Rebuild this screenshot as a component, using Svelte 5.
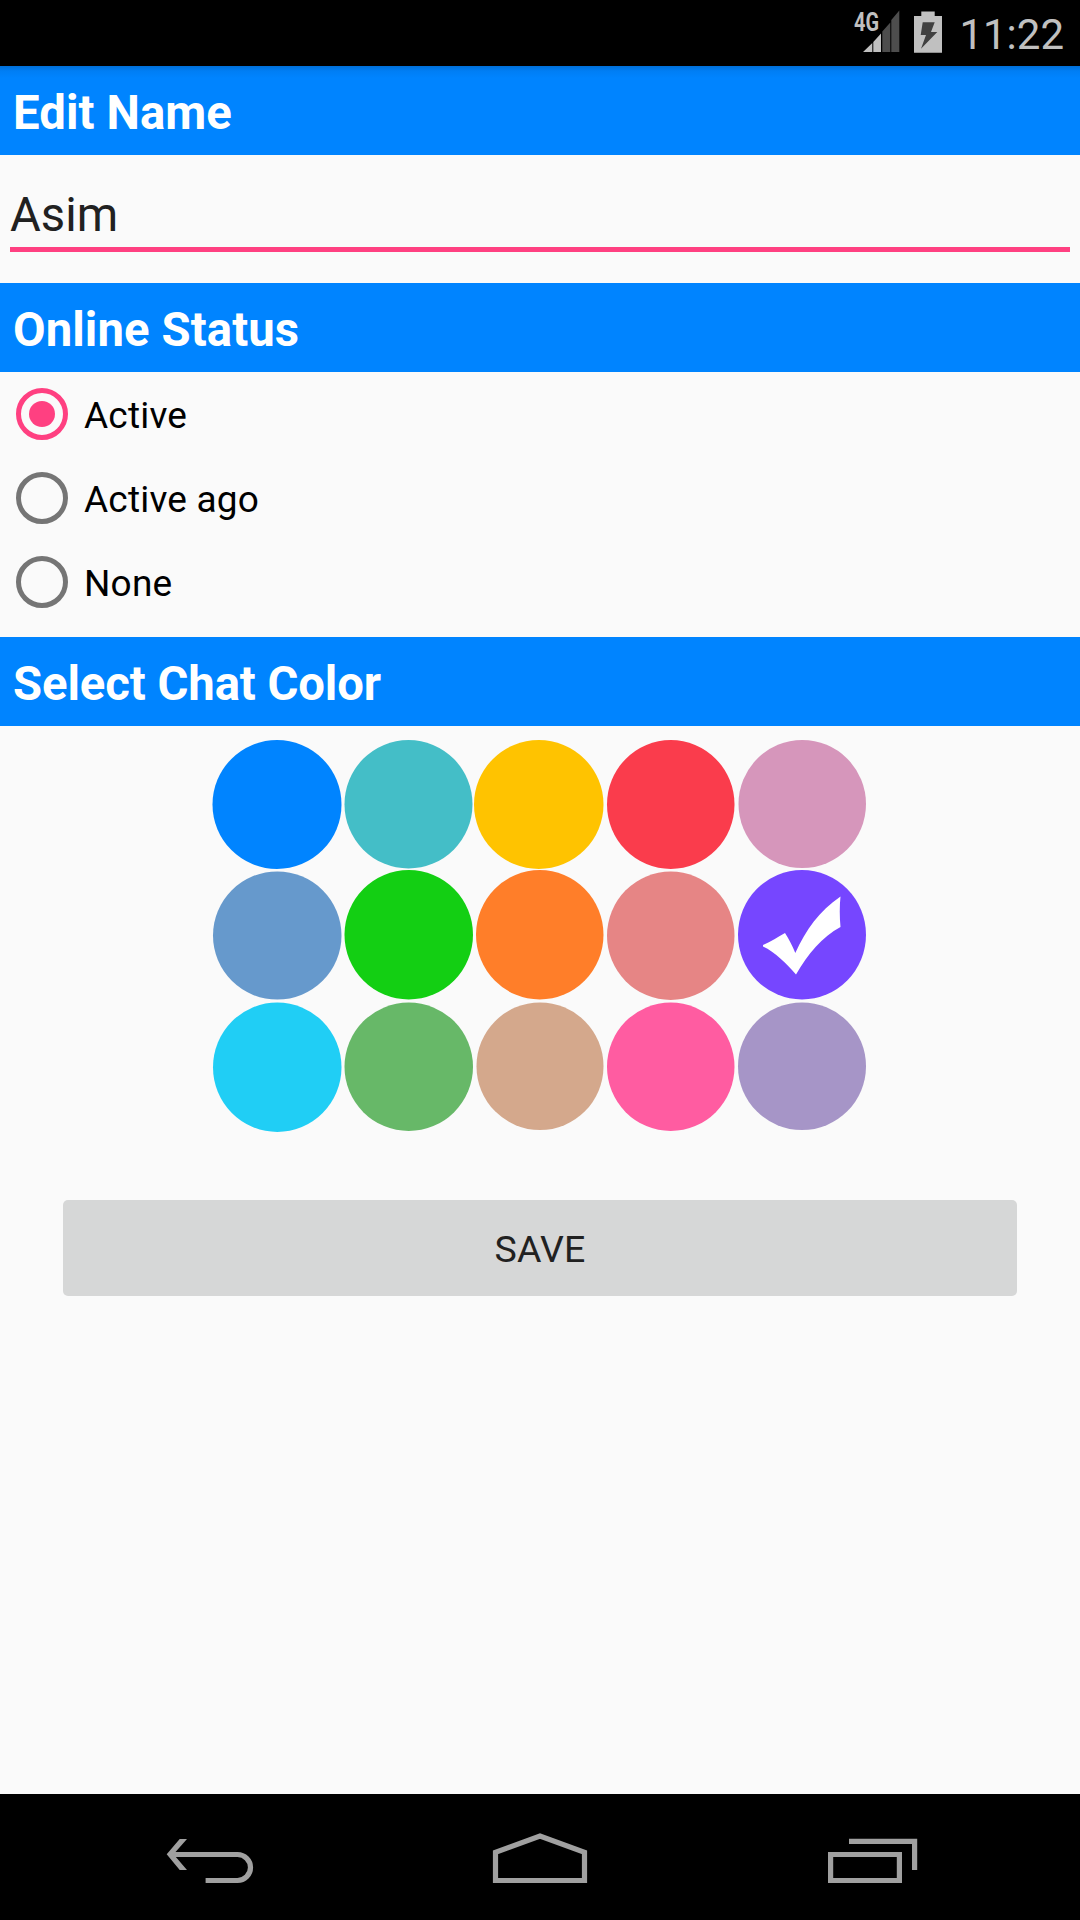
<script lang="ts">
  type Swatch = { color: string; x0: number; y0: number; x1: number; y1: number };

  // bounds of every disc inside its 131px cell
  const swatches: Swatch[] = [
    { color: '#0084ff', x0: 0.5, y0: 1, x1: 129.5, y1: 130 },
    { color: '#44bec7', x0: 1.5, y0: 1, x1: 129.5, y1: 129.5 },
    { color: '#ffc300', x0: 0, y0: 1, x1: 129.5, y1: 130 },
    { color: '#fa3c4c', x0: 2, y0: 1, x1: 129.5, y1: 130 },
    { color: '#d696bb', x0: 2.5, y0: 1, x1: 130, y1: 129 },
    { color: '#6699cc', x0: 1, y0: 1.5, x1: 129.5, y1: 129.5 },
    { color: '#13cf13', x0: 1.5, y0: 0, x1: 130, y1: 129.5 },
    { color: '#ff7e29', x0: 2, y0: 0, x1: 129.5, y1: 129.5 },
    { color: '#e68585', x0: 2, y0: 1.5, x1: 129.5, y1: 130 },
    { color: '#7646ff', x0: 2, y0: 0, x1: 130, y1: 129.5 },
    { color: '#20cef5', x0: 1, y0: 1.5, x1: 129.5, y1: 131 },
    { color: '#67b868', x0: 1.5, y0: 1.5, x1: 130, y1: 130 },
    { color: '#d4a88c', x0: 2.5, y0: 1.5, x1: 129.5, y1: 129 },
    { color: '#ff5ca1', x0: 2, y0: 1.5, x1: 129.5, y1: 130 },
    { color: '#a695c7', x0: 2, y0: 1.5, x1: 130, y1: 129 },
  ];

  const statuses = ['Active', 'Active ago', 'None'];

  let name = $state('Asim');
  let status = $state('Active');
  let selected = $state(9);
</script>

<div class="screen">
  <div class="statusbar">
    <svg class="signal" width="52" height="66" viewBox="0 0 52 66">
      <text x="1" y="31" textLength="25" lengthAdjust="spacingAndGlyphs">4G</text>
      <path class="on" d="M10 52L19.3 43V52ZM20.3 52V42L28 33.5V52Z" />
      <path class="off" d="M29.3 52V31.5L37.3 22.5V52ZM38.3 52V20L46.3 10.5V52Z" />
    </svg>
    <svg class="battery" width="28" height="66" viewBox="0 0 28 66">
      <path class="on" d="M7.3 11.5H20.7V16H28V52.7H0V16H7.3Z" />
      <path class="bolt" d="M8.7 22.3H20.7L17 32H23.3L7 48.7L12 35H6.7Z" />
    </svg>
    <span class="clock">11:22</span>
  </div>

  <main>
    <h2 class="first">Edit Name</h2>
    <div class="field">
      <input type="text" bind:value={name} aria-label="Name" />
    </div>

    <h2>Online Status</h2>
    <div class="radios">
      {#each statuses as s}
        <button class="radio" class:checked={status === s} onclick={() => (status = s)}>
          <span class="ring"></span>
          <span class="label">{s}</span>
        </button>
      {/each}
    </div>

    <h2 class="tight">Select Chat Color</h2>
    <div class="palette">
      {#each swatches as s, i}
        <button class="swatch" aria-label={s.color} onclick={() => (selected = i)}>
          <svg width="131" height="131" viewBox="0 0 131 131">
            <ellipse
              cx={(s.x0 + s.x1) / 2}
              cy={(s.y0 + s.y1) / 2}
              rx={(s.x1 - s.x0) / 2}
              ry={(s.y1 - s.y0) / 2}
              fill={s.color}
            />
            {#if selected === i}
              <path
                fill="#fff"
                d="M27 75C35 71.5 42 67 49 63C53 69 56.5 76 59.3 83C70 60 83 41 104.5 26.5C103.5 36 103.5 47 104.5 57C86 67 72 84 60 104.5C51 94 39 82 27 76.5Z"
              />
            {/if}
          </svg>
        </button>
      {/each}
    </div>

    <button class="save">SAVE</button>
  </main>

  <nav>
    <svg viewBox="0 0 330 126">
      <path d="M125 60.5H192.5A13 13 0 0 1 192.5 86.5H160.6" />
      <path class="solid" d="M121.7 60.3L134.7 45H142L128.5 60.3L142 76H134.7Z" />
    </svg>
    <svg viewBox="0 0 330 126">
      <path d="M120.5 86.5V58.3L165 42L209.5 58.3V86.5Z" />
    </svg>
    <svg viewBox="0 0 330 126">
      <path d="M125.6 60.5H194.4V86.5H125.6Z" />
      <path d="M144 47.3H209.6V76" />
    </svg>
  </nav>
</div>

<style>
  :global(body) {
    margin: 0;
    background: #fafafa;
  }
  .screen {
    display: flex;
    flex-direction: column;
    width: 1080px;
    height: 1920px;
    overflow: hidden;
    background: #fafafa;
    color: #000;
    font-family: Roboto, sans-serif;
  }
  button {
    margin: 0;
    padding: 0;
    border: 0;
    background: none;
    color: inherit;
    font: inherit;
  }

  .statusbar {
    display: flex;
    flex: none;
    justify-content: flex-end;
    height: 66px;
    padding-right: 16px;
    background: #000;
    color: #c0c0c0;
  }
  .signal {
    margin-right: 9px;
  }
  .signal text {
    font-size: 25px;
    font-weight: 700;
    fill: #c0c0c0;
  }
  .on { fill: #c0c0c0; }
  .off { fill: #4d4d4d; }
  .bolt { fill: #404040; }
  .battery {
    margin-right: 16px;
  }
  .clock {
    width: 106px;
    font-size: 42px;
    font-weight: 400;
    line-height: 69px;
    text-align: right;
    white-space: nowrap;
  }

  main {
    flex: 1;
  }
  h2 {
    height: 89px;
    margin: 0;
    padding-left: 13px;
    background: #0084ff;
    color: #fff;
    font-size: 47.25px;
    font-weight: 700;
    letter-spacing: 0.1px;
    line-height: 94px;
    white-space: nowrap;
  }
  h2.tight {
    letter-spacing: -0.08px;
  }
  h2.first {
    background: linear-gradient(#006fd8, #007ef4 5px, #0084ff 12px);
  }

  .field {
    height: 128px;
    padding: 0 10px;
    box-sizing: border-box;
  }
  .field input {
    display: block;
    width: 100%;
    height: 97px;
    box-sizing: border-box;
    padding: 27px 0 0;
    border: 0;
    border-bottom: 5px solid #ff4081;
    outline: 0;
    background: none;
    color: #212121;
    font: 400 47.25px Roboto, sans-serif;
  }

  .radios {
    display: flex;
    flex-direction: column;
    padding-bottom: 13px;
  }
  .radio {
    display: flex;
    align-items: center;
    gap: 16px;
    height: 84px;
    padding-left: 16px;
    font-size: 37px;
    letter-spacing: 0.2px;
    text-align: left;
  }
  .label {
    padding-top: 3px;
  }
  .ring {
    display: grid;
    place-items: center;
    width: 52px;
    height: 52px;
    box-sizing: border-box;
    border: 5px solid #757575;
    border-radius: 50%;
  }
  .checked .ring {
    border-color: #ff4081;
  }
  .checked .ring::after {
    content: '';
    width: 26px;
    height: 26px;
    border-radius: 50%;
    background: #ff4081;
  }

  .palette {
    display: grid;
    grid-template-columns: repeat(5, 131px);
    margin: 13px 0 0 212px;
  }
  .swatch {
    width: 131px;
    height: 131px;
  }
  .swatch svg {
    display: block;
  }

  .save {
    display: block;
    width: 954px;
    height: 96px;
    margin: 68px auto 0;
    border-radius: 5px;
    background: #d6d7d7;
    color: #212121;
    font-size: 37.5px;
    letter-spacing: 0.2px;
    line-height: 98px;
    text-align: center;
  }

  nav {
    display: flex;
    flex: none;
    justify-content: center;
    height: 126px;
    background: #000;
  }
  nav svg {
    width: 330px;
    height: 126px;
  }
  nav path {
    fill: none;
    stroke: #a0a0a0;
    stroke-width: 5.2;
  }
  nav .solid {
    fill: #a0a0a0;
    stroke: none;
  }
</style>
